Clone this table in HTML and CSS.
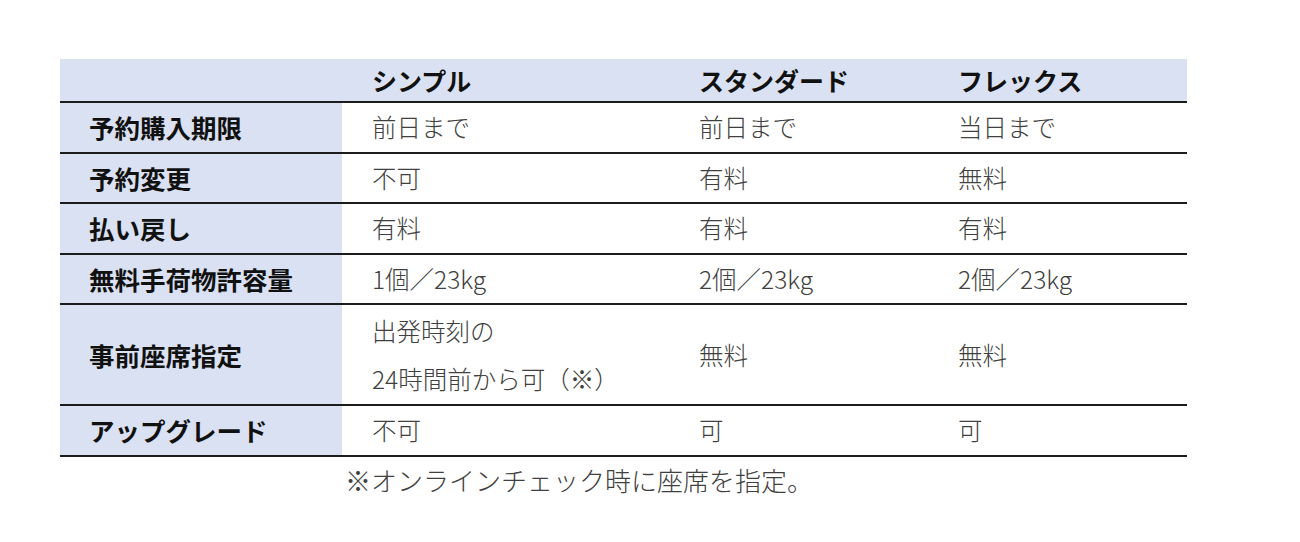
FILE: index.html
```html
<!DOCTYPE html>
<html lang="ja">
<head>
<meta charset="utf-8">
<link rel="stylesheet" href="styles.css">
</head>
<body>
<div class="wrap">
  <table class="fare">
    <colgroup>
      <col class="c1"><col class="c2"><col class="c3"><col class="c4">
    </colgroup>
    <thead>
      <tr class="head">
        <th></th>
        <th>シンプル</th>
        <th>スタンダード</th>
        <th>フレックス</th>
      </tr>
    </thead>
    <tbody>
      <tr><th>予約購入期限</th><td>前日まで</td><td>前日まで</td><td>当日まで</td></tr>
      <tr><th>予約変更</th><td>不可</td><td>有料</td><td>無料</td></tr>
      <tr><th>払い戻し</th><td>有料</td><td>有料</td><td>有料</td></tr>
      <tr><th>無料手荷物許容量</th><td>1個／23kg</td><td>2個／23kg</td><td>2個／23kg</td></tr>
      <tr class="tall"><th>事前座席指定</th><td>出発時刻の<br>24時間前から可（※）</td><td>無料</td><td>無料</td></tr>
      <tr><th>アップグレード</th><td>不可</td><td>可</td><td>可</td></tr>
    </tbody>
  </table>
  <p class="note">※オンラインチェック時に座席を指定。</p>
</div>
</body>
</html>
```
FILE: styles.css
```css
html, body {
  margin: 0;
  padding: 0;
  background: #ffffff;
}
body {
  font-family: "Noto Sans CJK JP", "Noto Sans", sans-serif;
}
.wrap {
  padding: 59px 0 0 60px;
}
.fare {
  border-collapse: collapse;
  width: 1127px;
  table-layout: fixed;
}
.c1 { width: 282px; }
.c2 { width: 327px; }
.c3 { width: 259px; }
.c4 { width: 259px; }
.fare th,
.fare td {
  padding: 0 0 0 30px;
  text-align: left;
  vertical-align: middle;
  font-size: 24.5px;
  line-height: 48px;
  height: 48.5px;
  border-bottom: 2px solid #1c1c1c;
}
.fare tbody th {
  background: #d9e1f2;
  font-weight: 700;
  font-size: 25.5px;
  color: #111111;
  padding-left: 29px;
}
.fare td {
  font-weight: 300;
  color: #404040;
}
.fare .head th {
  background: #d9e1f2;
  height: 42px;
  line-height: 42px;
  font-size: 25px;
  font-weight: 700;
  color: #111111;
}
.fare .tall th,
.fare .tall td {
  height: 99px;
}
.note {
  margin: 0;
  padding-left: 285px;
  font-size: 26px;
  line-height: 46px;
  font-weight: 300;
  color: #404040;
}
```
